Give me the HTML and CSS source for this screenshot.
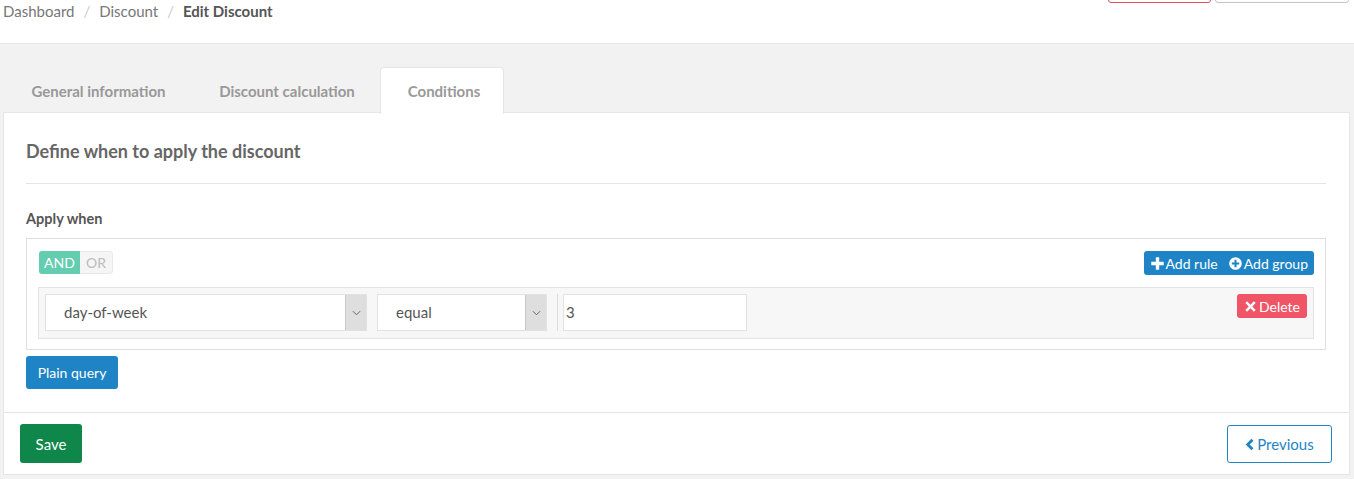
FILE: index.html
```html
<!DOCTYPE html>
<html>
<head>
<meta charset="utf-8">
<link rel="stylesheet" href="styles.css">
</head>
<body>
<header class="topbar">
  <nav class="crumbs">
    <span class="crumb">Dashboard</span><span class="sep">/</span><span class="crumb">Discount</span><span class="sep">/</span><span class="crumb current">Edit Discount</span>
  </nav>
  <div class="top-actions">
    <button class="tbtn tbtn-red"></button>
    <button class="tbtn tbtn-grey"></button>
  </div>
</header>
<main class="main">
  <ul class="tabs">
    <li class="tab tab-general">General information</li>
    <li class="tab tab-calc">Discount calculation</li>
    <li class="tab tab-cond active">Conditions</li>
  </ul>
  <section class="panel">
    <div class="panel-body">
      <h2 class="title">Define when to apply the discount</h2>
      <hr class="rule-line">
      <div class="label">Apply when</div>
      <div class="qb">
        <div class="qb-head">
          <div class="andor"><span class="ao and">AND</span><span class="ao or">OR</span></div>
          <div class="addgrp">
            <span class="addbtn"><svg class="ic" viewBox="0 0 14 14" width="13" height="13"><path d="M5.2 0.3h3.6v4.9h4.9v3.6H8.8v4.9H5.2V8.8H0.3V5.2h4.9z" fill="#fff"/></svg>Add rule</span>
            <span class="addbtn"><svg class="ic" viewBox="0 0 14 14" width="13" height="13"><circle cx="7" cy="7" r="6.8" fill="#fff"/><path d="M5.9 3h2.2v2.9H11v2.2H8.1V11H5.9V8.1H3V5.9h2.9z" fill="#1e84c6"/></svg>Add group</span>
          </div>
        </div>
        <div class="qrow">
          <div class="sel sel-field"><span class="sel-text">day-of-week</span><span class="sel-arrow"><svg viewBox="0 0 10 6" width="9" height="6"><path d="M1 1l4 4 4-4" fill="none" stroke="#666" stroke-width="1.1"/></svg></span></div>
          <div class="sel sel-op"><span class="sel-text">equal</span><span class="sel-arrow"><svg viewBox="0 0 10 6" width="9" height="6"><path d="M1 1l4 4 4-4" fill="none" stroke="#666" stroke-width="1.1"/></svg></span></div>
          <div class="vsep"></div>
          <div class="valinput">3</div>
          <div class="spacer"></div>
          <span class="delbtn"><svg class="ic" viewBox="0 0 12 12" width="11" height="11"><path d="M2.3 0.4L6 4.1 9.7 0.4l1.9 1.9L7.9 6l3.7 3.7-1.9 1.9L6 7.9 2.3 11.6 0.4 9.7 4.1 6 0.4 2.3z" fill="#fff"/></svg>Delete</span>
        </div>
      </div>
      <button class="plain">Plain query</button>
    </div>
    <div class="panel-foot">
      <button class="save">Save</button>
      <button class="prev"><svg class="ic" viewBox="0 0 10 14" width="9" height="13"><path d="M7.2 0.6l2.2 2.2L5.2 7l4.2 4.2-2.2 2.2L0.8 7z" fill="#1e84c6"/></svg>Previous</button>
    </div>
  </section>
</main>
</body>
</html>
```
FILE: styles.css
```css
* { box-sizing: border-box; }
html, body { margin: 0; padding: 0; }
body {
  font-family: Lato, "Open Sans", "Liberation Sans", sans-serif;
  background: #f2f2f2;
  color: #555;
  height: 479px;
  overflow: hidden;
}
.topbar {
  background: #fff;
  height: 44px;
  border-bottom: 1px solid #e6e6e6;
  display: flex;
  justify-content: space-between;
  align-items: flex-start;
  padding: 0 5px 0 3px;
}
.crumbs {
  font-size: 15px;
  line-height: 20px;
  padding-top: 1px;
}
.crumb { color: #777; }
.crumb.current { color: #555; font-weight: 700; }
.sep { color: #ccc; padding: 0 9px; }
.top-actions {
  display: flex;
  gap: 4px;
  margin-top: -31px;
}
.tbtn {
  height: 34px;
  background: #fff;
  border-radius: 3px;
  padding: 0;
}
.tbtn-red { width: 103px; border: 1px solid #e0525f; }
.tbtn-grey { width: 134px; border: 1px solid #c4c4c4; }
.main {
  padding: 23px 4px 0 3px;
}
.tabs {
  list-style: none;
  margin: 0;
  padding: 0;
  display: flex;
  height: 46px;
}
.tab {
  height: 46px;
  line-height: 46px;
  font-size: 15px;
  font-weight: 700;
  color: #999;
  text-align: center;
  border: 1px solid transparent;
  border-bottom: none;
  border-radius: 4px 4px 0 0;
  white-space: nowrap;
}
.tab-general { width: 191px; }
.tab-calc { width: 186px; }
.tab-cond { width: 124px; padding-left: 4px; }
.tab.active {
  background: #fff;
  border-color: #e6e6e6;
  margin-bottom: -1px;
  height: 47px;
  position: relative;
  z-index: 1;
}
.panel {
  background: #fff;
  border: 1px solid #e6e6e6;
  margin-top: -1px;
  height: 363px;
}
.panel-body {
  padding: 26px 23px 23px 22px;
  border-bottom: 1px solid #e6e6e6;
}
.title {
  margin: 0;
  font-size: 18px;
  line-height: 24px;
  font-weight: 700;
  color: #666;
}
.rule-line {
  border: none;
  border-top: 1px solid #e6e6e6;
  margin: 20px 0 0 0;
}
.label {
  margin-top: 25px;
  font-size: 14.5px;
  font-weight: 700;
  line-height: 20px;
  color: #555;
}
.qb {
  margin-top: 9px;
  border: 1px solid #dedede;
  padding: 12px 11px 10px 11px;
}
.qb-head {
  display: flex;
  justify-content: space-between;
  align-items: flex-start;
  height: 25px;
}
.andor {
  display: flex;
  height: 23px;
  border-radius: 3px;
  overflow: hidden;
  margin-left: 1px;
  margin-top: 0;
}
.ao {
  font-size: 14px;
  line-height: 23px;
  height: 23px;
}
.and { background: #64cdb0; color: #fff; width: 41px; text-align: center; }
.or { background: #f5f5f5; color: #bbb; width: 33px; text-align: center; border: 1px solid #e8e8e8; border-left: none; border-radius: 0 3px 3px 0; line-height: 21px; }
.addgrp {
  display: flex;
  background: #1e84c6;
  border-radius: 3px;
  height: 24px;
  align-items: center;
  padding: 0 6px 0 7px;
  gap: 11px;
}
.addbtn {
  color: #fff;
  font-size: 14px;
  display: flex;
  align-items: center;
  gap: 2px;
}
.ic { display: block; flex: none; }
.qrow {
  margin-top: 11px;
  background: #f7f7f7;
  border: 1px solid #e3e3e3;
  height: 52px;
  display: flex;
  align-items: flex-start;
  padding: 6px 6px 0 6px;
}
.sel {
  height: 37px;
  background: #fff;
  border: 1px solid #e2e2e2;
  display: flex;
  align-items: stretch;
}
.sel-field { width: 322px; }
.sel-op { width: 170px; margin-left: 10px; }
.sel-text {
  flex: 1;
  font-size: 15px;
  color: #555;
  line-height: 35px;
  padding-left: 18px;
}
.sel-arrow {
  width: 21px;
  background: #dedede;
  border-left: 1px solid #c8c8c8;
  display: flex;
  align-items: center;
  justify-content: center;
}
.vsep {
  width: 1px;
  height: 37px;
  background: #dcdcdc;
  margin-left: 10px;
}
.valinput {
  width: 184px;
  height: 37px;
  margin-left: 5px;
  background: #fff;
  border: 1px solid #e2e2e2;
  font-size: 15px;
  line-height: 35px;
  padding-left: 2px;
  color: #555;
}
.spacer { flex: 1; }
.delbtn {
  margin-top: 0;
  height: 24px;
  background: #ef5566;
  color: #fff;
  font-size: 14px;
  border-radius: 3px;
  display: flex;
  align-items: center;
  gap: 3px;
  padding: 0 7px 0 8px;
}
.plain {
  display: block;
  margin-top: 6px;
  width: 92px;
  height: 33px;
  background: #1e84c6;
  color: #fff;
  border: none;
  border-radius: 3px;
  font-family: inherit;
  font-size: 14px;
  padding: 0;
}
.panel-foot {
  display: flex;
  justify-content: space-between;
  align-items: flex-start;
  padding: 11px 17px 0 16px;
}
.save {
  width: 62px;
  height: 39px;
  background: #10874a;
  color: #fff;
  border: none;
  border-radius: 3px;
  font-family: inherit;
  font-size: 15px;
  padding: 0;
}
.prev {
  margin-top: 1px;
  width: 105px;
  height: 38px;
  background: #fff;
  color: #1e84c6;
  border: 1px solid #1e84c6;
  border-radius: 3px;
  font-family: inherit;
  font-size: 15px;
  padding: 0;
  display: flex;
  align-items: center;
  justify-content: center;
  gap: 3px;
}
```
